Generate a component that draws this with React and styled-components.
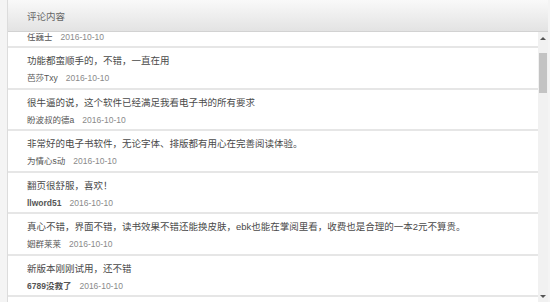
import React, { useLayoutEffect, useRef } from "react";
import styled, { createGlobalStyle } from "styled-components";

const Global = createGlobalStyle`
  html, body { margin: 0; padding: 0; background: #f4f4f4; }
  body { font-family: "Liberation Sans", "Noto Sans CJK SC", sans-serif; }
`;

const Page = styled.div`
  display: flex;
  width: 550px;
  height: 302px;
  padding-left: 7px;
  padding-right: 2px;
  box-sizing: border-box;
  background: #f4f4f4;
`;

const Panel = styled.div`
  flex: 1;
  display: flex;
  flex-direction: column;
  min-width: 0;
  border-left: 1px solid #dcdcdc;
  background: #fff;
`;

const Header = styled.div`
  height: 32px;
  flex: none;
  box-sizing: border-box;
  display: flex;
  align-items: center;
  padding-left: 19px;
  font-size: 9.5px;
  color: #666;
  background: linear-gradient(to bottom, #f9f9f9, #e3e3e3);
  border-bottom: 1px solid #d2d2d2;
`;

const Body = styled.div`
  flex: 1;
  min-height: 0;
  display: flex;
`;

const List = styled.div`
  flex: 1;
  min-width: 0;
  overflow: hidden;
`;

const ScrollBar = styled.div`
  width: 10px;
  flex: none;
  display: flex;
  flex-direction: column;
  background: #f1f1f1;
`;

const Arrow = styled.div`
  height: 12px;
  flex: none;
  display: flex;
  align-items: center;
  justify-content: center;
  &::before {
    content: "";
    border-left: 3px solid transparent;
    border-right: 3px solid transparent;
    ${(p) =>
      p.$down
        ? "border-top: 3px solid #555;"
        : "border-bottom: 3px solid #555;"}
  }
`;

const Track = styled.div`
  flex: 1;
  padding: 9px 1px 0;
`;

const Thumb = styled.div`
  height: 40px;
  background: #c3c3c3;
`;

const Row = styled.div`
  display: flex;
  flex-direction: column;
  gap: 1px;
  padding: 5px 0 1.5px 19px;
  border-bottom: 2px solid #e6e6e6;
`;

const Content = styled.div`
  font-size: 9.5px;
  line-height: 16px;
  color: #4a4a4a;
  white-space: nowrap;
`;

const Meta = styled.div`
  display: flex;
  gap: 8px;
  font-size: 8.5px;
  line-height: 16px;
`;

const Author = styled.span`
  color: #555;
  font-weight: ${(p) => (p.$bold ? "bold" : "normal")};
`;

const DateText = styled.span`
  color: #8a8a8a;
`;

const visible = [
  { text: "", author: "任巍士" },
  { text: "功能都蛮顺手的，不错，一直在用", author: "芭莎Txy" },
  { text: "很牛逼的说，这个软件已经满足我看电子书的所有要求", author: "盼波叔的德a" },
  { text: "非常好的电子书软件，无论字体、排版都有用心在完善阅读体验。", author: "为情心s动" },
  { text: "翻页很舒服，喜欢！", author: "llword51", bold: true },
  { text: "真心不错，界面不错，读书效果不错还能换皮肤，ebk也能在掌阅里看，收费也是合理的一本2元不算贵。", author: "姻群莱莱" },
  { text: "新版本刚刚试用，还不错", author: "6789没救了", bold: true },
];

const rows = [
  { text: "很好用的阅读软件，推荐给大家", author: "书虫小李" },
  ...visible,
];
const extra = [
  { text: "界面简洁，阅读体验很好", author: "读书人" },
  { text: "书很多，找书很方便", author: "小鱼儿" },
  { text: "夜间模式很护眼，赞一个", author: "晴天" },
  { text: "希望能增加更多免费书籍", author: "阿杰" },
  { text: "同步功能很好用，换手机也不怕", author: "木木" },
];
for (let i = 0; i < 32; i++) rows.push(extra[i % extra.length]);

export default function App() {
  const ref = useRef(null);
  useLayoutEffect(() => {
    if (ref.current) ref.current.scrollTop = 67;
  }, []);
  return (
    <>
      <Global />
      <Page>
        <Panel>
          <Header>评论内容</Header>
          <Body>
            <List ref={ref}>
              {rows.map((r, i) => (
                <Row key={i}>
                  <Content>{r.text || "\u00a0"}</Content>
                  <Meta>
                    <Author $bold={r.bold}>{r.author}</Author>
                    <DateText>2016-10-10</DateText>
                  </Meta>
                </Row>
              ))}
            </List>
            <ScrollBar>
              <Arrow />
              <Track>
                <Thumb />
              </Track>
              <Arrow $down />
            </ScrollBar>
          </Body>
        </Panel>
      </Page>
    </>
  );
}
